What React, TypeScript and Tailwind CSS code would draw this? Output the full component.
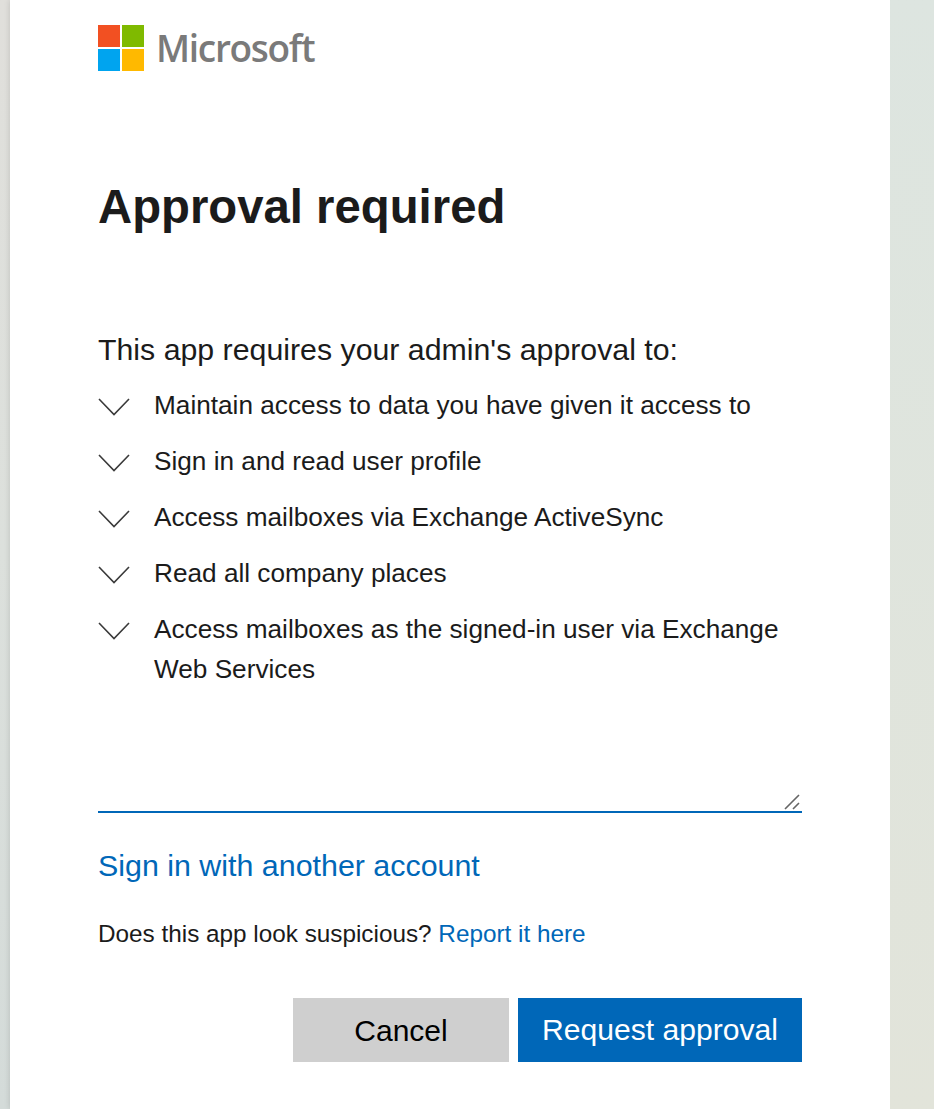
const items = [
  "Maintain access to data you have given it access to",
  "Sign in and read user profile",
  "Access mailboxes via Exchange ActiveSync",
  "Read all company places",
  "Access mailboxes as the signed-in user via Exchange Web Services",
];

function Chevron() {
  return (
    <svg width="32" height="18" viewBox="0 0 32 18" fill="none" className="shrink-0 mt-[13px]">
      <path d="M1 1 L16 16.5 L31 1" stroke="#3a3a3a" strokeWidth="1.6" />
    </svg>
  );
}

function Logo() {
  return (
    <svg width="46" height="46" viewBox="0 0 46 46" className="shrink-0">
      <rect x="0" y="0" width="22" height="22" fill="#f25022" />
      <rect x="24" y="0" width="22" height="22" fill="#7fba00" />
      <rect x="0" y="24" width="22" height="22" fill="#00a4ef" />
      <rect x="24" y="24" width="22" height="22" fill="#ffb900" />
    </svg>
  );
}

export default function App() {
  return (
    <div className="h-[1109px] w-[934px] overflow-hidden bg-gradient-to-b from-[#e0dfdb] via-[#dce0dc] to-[#d4dbd9] font-['Liberation_Sans',sans-serif]">
      <div className="h-full flex">
        <div className="w-[10px] shrink-0" />
        <div className="w-[880px] h-full bg-white shadow-[0_0_6px_rgba(0,0,0,0.15)] pl-[88px] pr-[88px]">
          <div className="flex items-center h-[46px] mt-[25px] gap-[12px]">
            <Logo />
            <span className="font-['Open_Sans',sans-serif] font-semibold text-[37px] leading-[46px] tracking-[-1.3px] text-[#7a7a7a]">Microsoft</span>
          </div>
          <h1 className="mt-[107px] text-[47.3px] leading-[58px] font-bold text-[#1b1b1b]">Approval required</h1>
          <p className="mt-[94px] text-[30.3px] leading-[40px] text-[#1b1b1b]">This app requires your admin's approval to:</p>
          <div className="relative h-[443px] border-b-2 border-[#0067b8]">
            <ul className="pt-[15px] flex flex-col gap-[16px]">
              {items.map((t) => (
                <li key={t} className="flex gap-[24px]">
                  <Chevron />
                  <span className="text-[26.2px] leading-[40px] text-[#1b1b1b]">{t}</span>
                </li>
              ))}
            </ul>
            <svg width="18" height="16" viewBox="0 0 18 16" fill="none" className="absolute right-0 bottom-[1px]">
              <path d="M1 15 L15 1 M9 15 L15 9" stroke="#666" strokeWidth="1.6" />
            </svg>
          </div>
          <a className="block mt-[32px] text-[30.4px] leading-[40px] text-[#0067b8]">Sign in with another account</a>
          <p className="mt-[29px] text-[24.3px] leading-[40px] text-[#1b1b1b]">
            Does this app look suspicious? <a className="text-[#0067b8]">Report it here</a>
          </p>
          <div className="mt-[44px] flex justify-end gap-[9px]">
            <button className="w-[216px] h-[64px] bg-[#cfcfcf] text-[30px] text-black">Cancel</button>
            <button className="w-[284px] h-[64px] bg-[#0067b8] text-[30.1px] text-white">Request approval</button>
          </div>
        </div>
        <div className="flex-1 bg-gradient-to-b from-[#dde5e0] to-[#e2e4da]" />
      </div>
    </div>
  );
}
